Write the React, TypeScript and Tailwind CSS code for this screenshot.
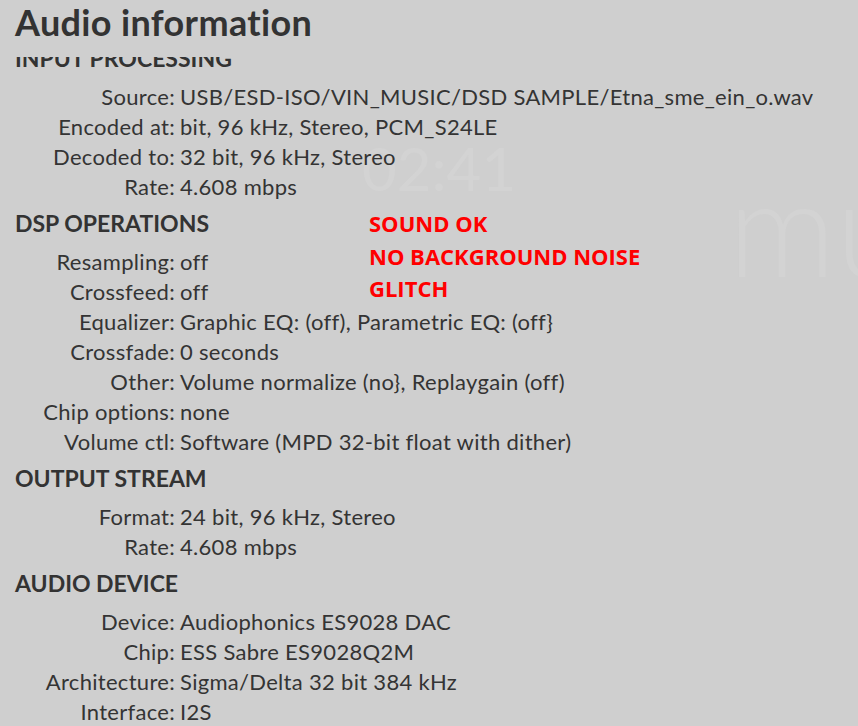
import React from "react";

type Row = [string, string];
type Section = { title: string; rows: Row[] };

const sections: Section[] = [
  {
    title: "INPUT PROCESSING",
    rows: [
      ["Source:", "USB/ESD-ISO/VIN_MUSIC/DSD SAMPLE/Etna_sme_ein_o.wav"],
      ["Encoded at:", "bit, 96 kHz, Stereo, PCM_S24LE"],
      ["Decoded to:", "32 bit, 96 kHz, Stereo"],
      ["Rate:", "4.608 mbps"],
    ],
  },
  {
    title: "DSP OPERATIONS",
    rows: [
      ["Resampling:", "off"],
      ["Crossfeed:", "off"],
      ["Equalizer:", "Graphic EQ: (off), Parametric EQ: (off}"],
      ["Crossfade:", "0 seconds"],
      ["Other:", "Volume normalize (no}, Replaygain (off)"],
      ["Chip options:", "none"],
      ["Volume ctl:", "Software (MPD 32-bit float with dither)"],
    ],
  },
  {
    title: "OUTPUT STREAM",
    rows: [
      ["Format:", "24 bit, 96 kHz, Stereo"],
      ["Rate:", "4.608 mbps"],
    ],
  },
  {
    title: "AUDIO DEVICE",
    rows: [
      ["Device:", "Audiophonics ES9028 DAC"],
      ["Chip:", "ESS Sabre ES9028Q2M"],
      ["Architecture:", "Sigma/Delta 32 bit 384 kHz"],
      ["Interface:", "I2S"],
    ],
  },
];

export default function App() {
  return (
    <div className="relative w-[858px] h-[726px] overflow-hidden bg-[#cfcfcf] text-[#333333] font-['Lato',sans-serif]">
      {/* faint background of the player behind the overlay */}
      <div className="absolute left-[362px] top-[138px] text-[60px] font-normal leading-none text-[#d3d3d3] select-none">
        02:41
      </div>
      <div className="absolute left-[728px] top-[159px] text-[134px] font-light leading-none text-[#d3d3d3] select-none">
        mu
      </div>

      <div className="relative flex flex-col h-full">
        <h1 className="h-[57px] shrink-0 pl-[15px] pt-[1px] text-[36px] font-bold leading-[1.2] tracking-[0.35px] text-[#333333]">
          Audio information
        </h1>
        <div className="flex-1 overflow-hidden">
          <div className="-mt-[14px] pl-[15px]">
            {sections.map((s, i) => (
              <div key={s.title} className={i === 0 ? "" : "mt-[6px]"}>
                <div className="mb-[9px] text-[23px] font-bold leading-[30px] text-[#333333]">
                  {s.title}
                </div>
                <div className="grid grid-cols-[160px_1fr] gap-x-[5px] text-[22px] leading-[30px] tracking-[0.3px] text-[#343434]">
                  {s.rows.map(([k, v], j) => (
                    <React.Fragment key={j}>
                      <div className="text-right whitespace-nowrap">{k}</div>
                      <div className="whitespace-nowrap">{v}</div>
                    </React.Fragment>
                  ))}
                </div>
              </div>
            ))}
          </div>
        </div>
      </div>

      {/* annotation */}
      <div className="absolute left-[369px] top-[207px] flex flex-col text-[22px] font-bold leading-[32.5px] text-[#ff0000] font-['Open_Sans',sans-serif]">
        <span>SOUND OK</span>
        <span>NO BACKGROUND NOISE</span>
        <span>GLITCH</span>
      </div>
    </div>
  );
}
